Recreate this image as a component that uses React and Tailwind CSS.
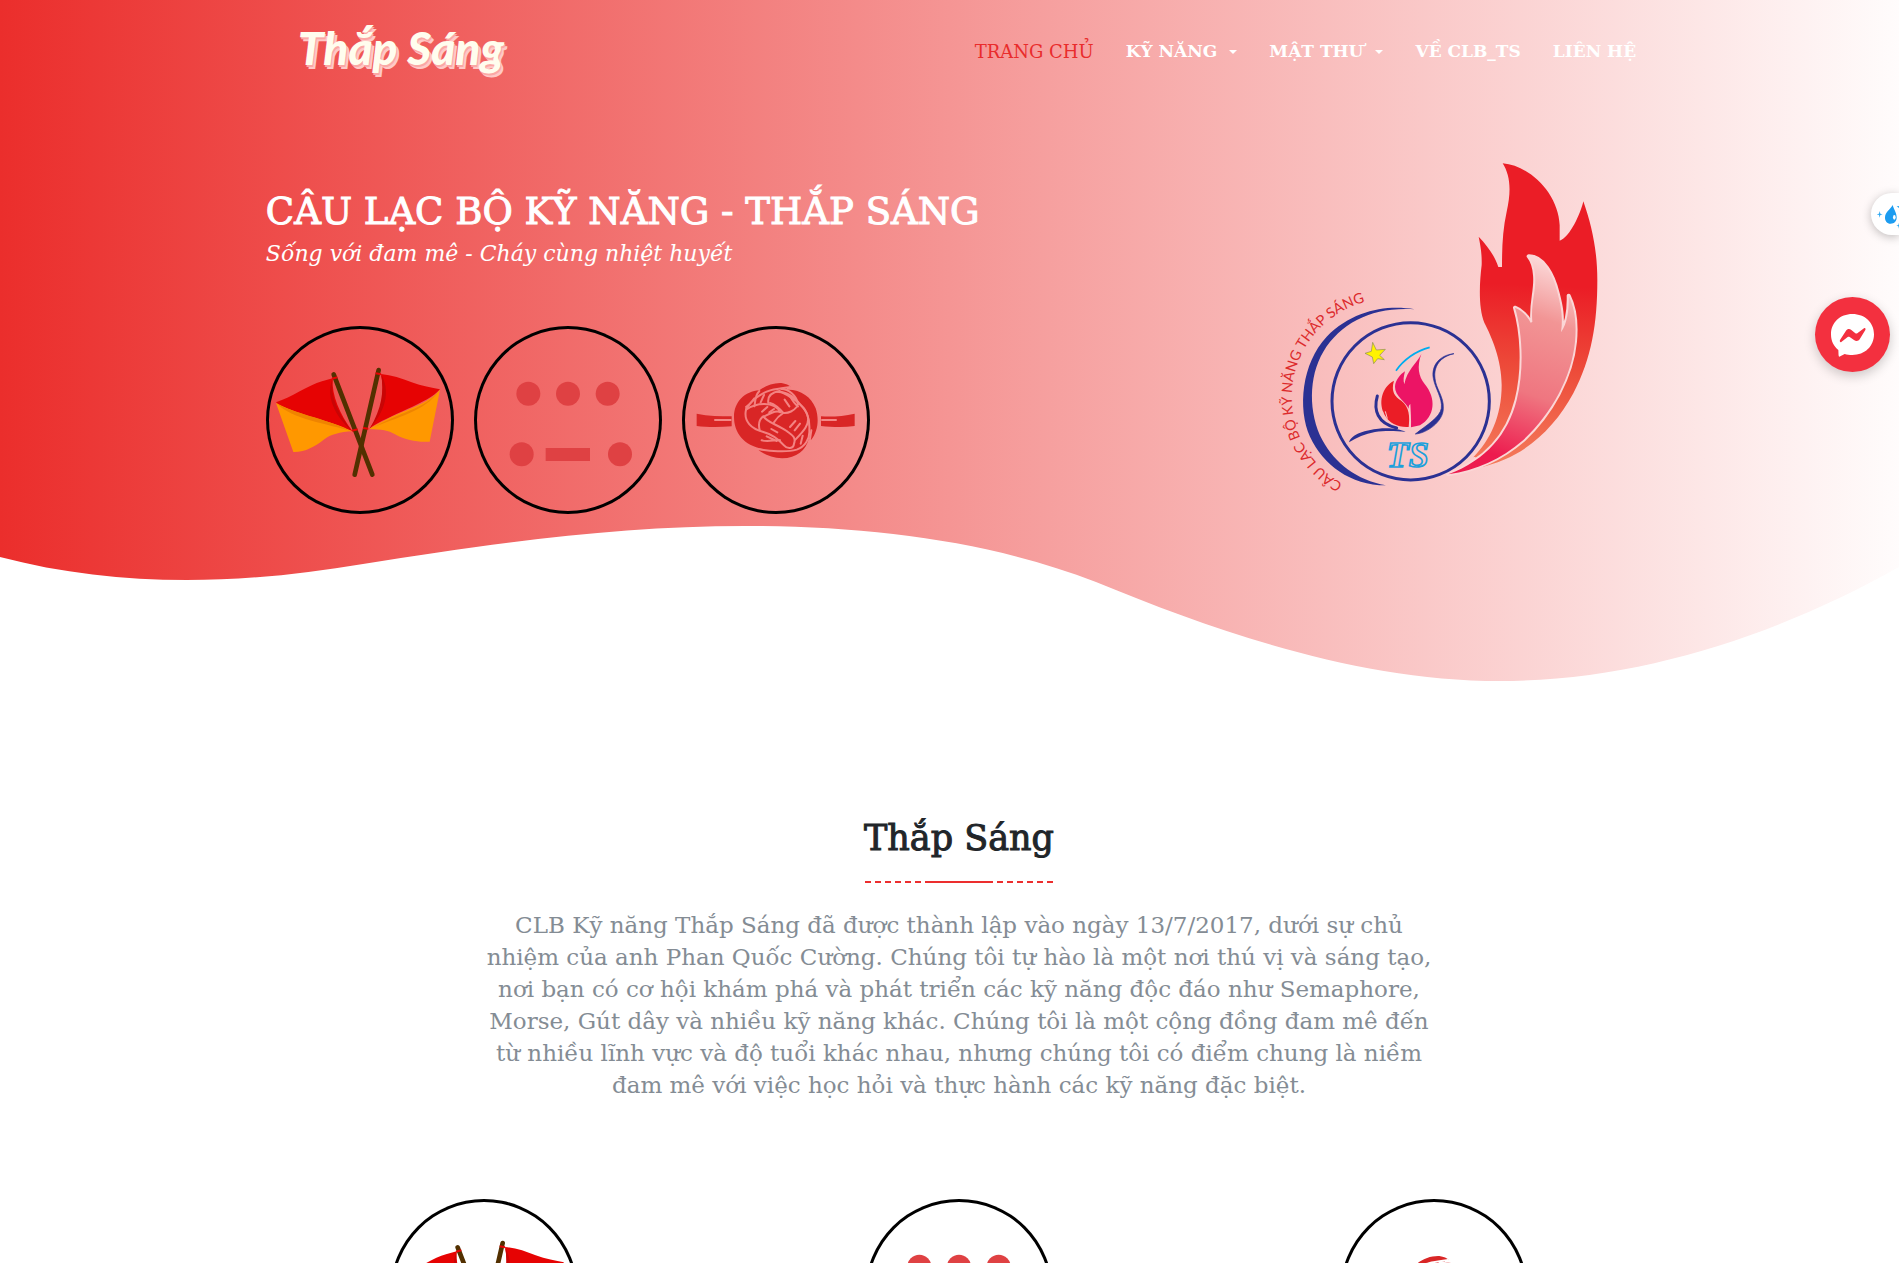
import React from "react";

const navItems = [
  { label: "TRANG CHỦ", active: true },
  { label: "KỸ NĂNG", menu: true },
  { label: "MẬT THƯ", menu: true },
  { label: "VỀ CLB_TS" },
  { label: "LIÊN HỆ" },
];

function FlagsIcon() {
  return (
    <svg viewBox="33 33 564 564" className="h-full w-full" role="img" aria-label="Semaphore">
      <path d="M63 262C110 247 160 210 201 199L233 190C229 240 255 300 292 348C230 330 110 310 63 262Z" fill="#e60303" />
      <path d="M63 264C110 290 170 305 210 318C245 328 270 338 292 349C255 351 228 358 206 374C180 394 150 412 115 411Z" fill="#ff9800" />
      <path d="M66 266C120 296 200 306 285 347C220 327 110 312 66 266Z" fill="#ef8400" />
      <path d="M233 192C224 250 255 300 290 347C240 305 210 240 233 192Z" fill="#c90505" />
      <path d="M378 177C410 180 440 190 470 202C500 213 530 218 555 223C520 265 400 300 343 341C375 300 392 240 378 177Z" fill="#e60303" />
      <path d="M555 224C530 256 480 275 440 292C400 310 370 325 343 342C380 344 400 345 420 358C455 378 490 382 524 380Z" fill="#ff9800" />
      <path d="M552 228C510 282 430 292 355 338C420 308 510 290 552 228Z" fill="#ef8400" />
      <path d="M378 178C408 230 390 290 345 340C380 280 388 230 378 178Z" fill="#c90505" />
      <g stroke="#523000" strokeWidth="14" strokeLinecap="round">
        <path d="M236 178L352 479" />
        <path d="M371 165L299 479" />
      </g>
      <g stroke="#e60303" strokeWidth="6">
        <path d="M231 191L247 187M362 175L378 178M291 347L308 343M324 339L340 341" />
      </g>
    </svg>
  );
}

function MorseIcon() {
  return (
    <svg viewBox="657 33 564 564" className="h-full w-full" role="img" aria-label="Morse">
      <g fill="#df4143">
        <circle cx="820" cy="236" r="36" />
        <circle cx="939" cy="236" r="36" />
        <circle cx="1058" cy="236" r="36" />
        <circle cx="800" cy="418" r="36" />
        <rect x="872" y="399" width="133" height="39" />
        <circle cx="1095" cy="418" r="36" />
      </g>
    </svg>
  );
}

function KnotIcon({ id }) {
  return (
    <svg viewBox="336 33 564 564" className="h-full w-full" role="img" aria-label="Gút dây">
      <mask id={id} maskUnits="userSpaceOnUse" x="334" y="33" width="564" height="564">
        <rect x="334" y="33" width="564" height="564" fill="#fff" />
        <g fill="none" stroke="#000" strokeWidth="6" strokeLinecap="round" strokeLinejoin="round">
          <path d="M528 284C520 320 545 342 578 350C605 357 625 372 642 391C652 403 671 402 672 386C680 365 662 358 650 348C620 328 592 322 580 304C566 315 565 333 570 348" />
          <path d="M528 284C560 262 612 258 632 292C620 284 604 294 578 306" />
          <path d="M528 276C542 266 550 252 568 242C592 224 616 222 660 216" />
          <path d="M568 228C552 246 557 262 553 274M528 282L553 250" />
          <path d="M582 240L572 262M595 264C592 244 604 232 628 228C655 240 700 266 712 300C722 326 700 350 676 374" />
          <path d="M620 230C645 230 670 240 690 268M660 244C668 258 674 268 684 274M690 268C710 284 720 310 718 346C720 372 704 396 680 404C650 413 596 408 568 403" />
          <path d="M634 222C655 222 680 240 684 268" />
          <path d="M600 264C614 268 628 280 640 294C656 296 672 286 680 276M640 294C630 300 618 312 612 322" />
          <path d="M575 376C600 382 616 372 630 376M590 364L620 378M644 254L658 274M592 276L576 290M612 282L598 292M604 342L622 352M690 326L674 346M676 318L660 336M698 362L692 386M724 346L720 372" />
        </g>
      </mask>
      <g fill="#d92626">
        <path d="M380 296C415 304 450 303 485 304V334C450 337 410 337 380 333Z" />
        <path d="M753 304C790 306 820 303 854 296V333C820 338 785 336 753 333Z" />
        <path
          mask={`url(#${id})`}
          d="M568 226C585 212 610 203 634 204C648 206 657 211 663 216C652 217 648 220 650 224C690 222 724 245 737 280C748 312 744 350 723 375L716 372C708 405 680 430 636 430C608 429 586 420 566 406L580 402C520 392 492 352 492 306C492 260 525 229 568 226Z"
        />
      </g>
      <path d="M435 315H482M756 315H798" stroke="#f48886" strokeWidth="6" strokeLinecap="round" />
    </svg>
  );
}

function Emblem() {
  return (
    <svg viewBox="0 0 1080 1050" className="h-[350px] w-[360px] shrink-0" role="img" aria-label="Câu lạc bộ kỹ năng Thắp Sáng">
      <defs>
        <linearGradient id="flameOuter" gradientUnits="userSpaceOnUse" x1="800" y1="40" x2="760" y2="950">
          <stop offset="0" stopColor="#eb1d26" />
          <stop offset="0.4" stopColor="#eb1d26" />
          <stop offset="0.68" stopColor="#ed4c3a" />
          <stop offset="1" stopColor="#f47b5b" />
        </linearGradient>
        <linearGradient id="flameInner" gradientUnits="userSpaceOnUse" x1="870" y1="340" x2="650" y2="950">
          <stop offset="0" stopColor="#fbd6d6" />
          <stop offset="0.25" stopColor="#f29595" />
          <stop offset="0.6" stopColor="#ef7680" />
          <stop offset="0.92" stopColor="#ed1b4e" />
        </linearGradient>
        <path id="emblemArc" d="M248 1001A296 296 0 0 1 440 450" />
      </defs>

      <path
        fill="url(#flameOuter)"
        d="M728 40C815 48 895 135 899 225L899 272C930 262 962 190 970 154C995 225 1012 300 1012 390C1012 520 995 625 940 730C880 840 790 925 655 953C630 945 660 915 640 922C690 870 725 800 725 705C725 630 695 560 673 518C655 475 658 400 665 345C666 310 661 285 656 260C685 290 705 320 715 351L726 351C726 290 728 240 740 185C755 120 750 75 728 40Z"
      />
      <path
        fill="url(#flameInner)"
        stroke="#fbd6d6"
        strokeWidth="12"
        strokeLinejoin="round"
        paintOrder="stroke"
        d="M565 973C680 930 745 850 770 750C795 650 785 540 765 473C785 480 800 497 812 518L817 516C812 455 830 420 825 375C823 350 815 330 806 319C850 318 880 375 893 430C902 465 910 500 903 547C925 515 927 470 926 437C945 475 950 520 945 575C935 680 875 790 790 870C720 930 650 960 565 973Z"
      />

      <path d="M464 478C380 464 280 480 200 560C125 640 112 775 150 860C190 945 270 1005 378 1006C290 990 225 940 187 870C145 790 145 680 190 605C245 515 340 470 464 478Z" fill="#2b3193" />
      <circle cx="452" cy="754" r="236" fill="none" stroke="#2b3193" strokeWidth="9" />

      <text fill="#dc2a2c" fontFamily="Lato, sans-serif" fontSize="43">
        <textPath href="#emblemArc">CÂU LẠC BỘ KỸ NĂNG THẮP SÁNG</textPath>
      </text>

      <path d="M338 577L349 600L376 598L359 616L373 629L353 626L341 641L337 621L315 610L334 604Z" fill="#fff200" stroke="#8b8b5a" strokeWidth="2" />
      <path d="M408 662C430 630 468 602 509 592" fill="none" stroke="#00adee" strokeWidth="5" />
      <path d="M484 612C470 650 476 680 494 702C530 745 525 800 480 826L453 832C454 808 452 785 451 762C446 766 446 770 446 776C438 755 404 738 405 710C406 690 422 672 435 664C431 680 429 690 433 703C441 660 470 640 484 612Z" fill="#ec1465" />
      <path d="M402 692C392 725 405 740 424 752C448 770 450 800 446 831C415 833 388 820 376 798C352 760 366 710 402 692Z" fill="#eb1d26" />
      <path d="M382 806L376 784M371 800L368 784" stroke="#fac6c6" strokeWidth="3" />
      <path d="M352 738C340 780 352 820 410 834" fill="none" stroke="#2b3193" strokeWidth="9" strokeLinecap="round" />
      <path d="M267 877C275 850 320 840 355 836C390 832 420 838 437 845C400 842 370 842 345 846C315 852 290 862 267 877Z" fill="#2b3193" />
      <path d="M582 611C540 615 513 645 520 685C525 715 548 745 544 775C540 802 500 825 466 852C500 850 550 815 550 775C552 740 527 715 525 685C520 650 540 620 582 611Z" fill="#2b3193" stroke="#2b3193" strokeWidth="2" />
      <text x="380" y="951" fontFamily="'DejaVu Serif', serif" fontStyle="italic" fontWeight="700" fontSize="108" fill="none" stroke="#1ba0dc" strokeWidth="5">
        <tspan fontFamily="'Liberation Serif', serif">TS</tspan>
      </text>
    </svg>
  );
}

function SkillCircle({ children }) {
  return <div className="size-[188px] shrink-0 rounded-full shadow-[inset_0_0_0_3px_#000]">{children}</div>;
}

export default function App() {
  return (
    <div className="h-screen overflow-hidden bg-white font-['DejaVu_Serif',serif]">
      <div className="bg-linear-to-r/srgb from-[#eb2e2c] to-[#fffcfc]">
        <div className="pl-[14%] pr-[13%]">
          <header className="flex h-[104px] items-center justify-between pr-4 pl-8">
            <a href="#home" className="pb-2 font-['Lato',sans-serif] text-[46px] leading-none font-black text-[#fffdee] italic [text-shadow:1px_2px_0_#fba8a5,3px_4px_0_#ffc8c6]">
              Thắp Sáng
            </a>
            <nav className="flex items-center gap-8 text-[17px] font-bold text-white">
              {navItems.map((item) => (
                <a
                  key={item.label}
                  href="#menu"
                  className={item.active ? "text-lg font-normal whitespace-nowrap text-[#e92c2c]" : "flex items-center gap-3 whitespace-nowrap"}
                >
                  {item.label}
                  {item.menu && <span className="border-x-4 border-t-4 border-x-transparent border-t-white" />}
                </a>
              ))}
            </nav>
          </header>

          <section className="flex h-[416px] justify-between">
            <div className="pt-20">
              <h1 className="text-[37px] leading-[56px] text-white [-webkit-text-stroke:1px_white]">CÂU LẠC BỘ KỸ NĂNG - THẮP SÁNG</h1>
              <p className="text-[22px] leading-7 text-white italic">Sống với đam mê - Cháy cùng nhiệt huyết</p>
              <div className="mt-[58px] flex gap-5">
                <SkillCircle><FlagsIcon /></SkillCircle>
                <SkillCircle><MorseIcon /></SkillCircle>
                <SkillCircle><KnotIcon id="knotHero" /></SkillCircle>
              </div>
            </div>
            <div className="pt-[46px] pr-8">
              <Emblem />
            </div>
          </section>
        </div>
        <svg viewBox="0 520 1899 180" preserveAspectRatio="none" className="block h-[180px] w-full" aria-hidden="true">
          <path d="M0 557C118 588 240 585 363 564C500 542 620 526 745 526C870 526 990 541 1096 582C1220 633 1360 681 1500 681C1640 681 1780 634 1899 567V701H0Z" fill="#fff" />
        </svg>
      </div>

      <main className="pt-[110px] pr-[12%] pl-[13%]">
        <div className="mx-auto flex max-w-[960px] flex-col items-center text-center">
          <h2 className="text-[35px] leading-[56px] text-[#212529] [-webkit-text-stroke:1px_#212529]">Thắp Sáng</h2>
          <div className="mt-[15px] flex h-0.5 w-[188px]">
            <span className="flex-1 bg-[repeating-linear-gradient(90deg,#ec2e2e_0_6px,transparent_6px_10px)]" />
            <span className="w-[66px] bg-[#ec2e2e]" />
            <span className="flex-1 bg-[repeating-linear-gradient(270deg,#ec2e2e_0_6px,transparent_6px_10px)]" />
          </div>
          <p className="mt-[26px] text-[23px] leading-8 text-[#848c94]">
            CLB Kỹ năng Thắp Sáng đã được thành lập vào ngày 13/7/2017, dưới sự chủ nhiệm của anh Phan Quốc Cường. Chúng tôi tự hào là một nơi thú vị và sáng tạo, nơi bạn có cơ hội khám phá và phát triển các kỹ năng độc đáo như Semaphore, Morse, Gút dây và nhiều kỹ năng khác. Chúng tôi là một cộng đồng đam mê đến từ nhiều lĩnh vực và độ tuổi khác nhau, nhưng chúng tôi có điểm chung là niềm đam mê với việc học hỏi và thực hành các kỹ năng đặc biệt.
          </p>
        </div>
        <div className="mt-[98px] grid grid-cols-3 justify-items-center">
          <SkillCircle><FlagsIcon /></SkillCircle>
          <SkillCircle><MorseIcon /></SkillCircle>
          <SkillCircle><KnotIcon id="knotCard" /></SkillCircle>
        </div>
      </main>

      <button aria-label="Droplet tools" className="fixed top-[193px] right-0 h-[42px] w-7 overflow-hidden rounded-l-full bg-white shadow-[0_2px_10px_rgba(0,0,0,0.25)]">
        <svg viewBox="273 69 84 126" className="h-full w-full" aria-hidden="true">
          <path d="M338 105C341 118 350 128 350 142C350 154 343 161 332 161C321 161 315 153 315 143C315 127 330 119 338 105Z" fill="#1c9cf0" />
          <ellipse cx="343" cy="142" rx="4" ry="7" fill="#fff" />
          <path d="M299 123L301 131L308 133L301 135L299 143L297 135L290 133L297 131ZM357 158L355 165L349 167L355 169L357 176ZM350 109L357 108V114Z" fill="#2da8f2" />
        </svg>
      </button>
      <button aria-label="Messenger" className="fixed top-[297px] right-[9px] size-[75px] rounded-full bg-[#f3303f] shadow-[0_4px_12px_rgba(0,0,0,0.2)]">
        <svg viewBox="105 381 225 225" className="h-full w-full" aria-hidden="true">
          <path d="M217 432C255 432 282 458 282 493C282 529 255 555 217 555C208 555 201 554 194 552L178 560C175 558 176 555 175 540C161 529 153 513 153 493C153 458 180 432 217 432Z" fill="#fff" />
          <path d="M180 510L198 482C202 476 209 476 214 480L226 490C228 491 230 491 232 490L252 475C255 473 258 476 256 480L239 508C235 514 228 515 222 510L209 501C207 500 205 500 203 501L184 516C181 518 178 514 180 510Z" fill="#f3303f" />
        </svg>
      </button>
    </div>
  );
}
